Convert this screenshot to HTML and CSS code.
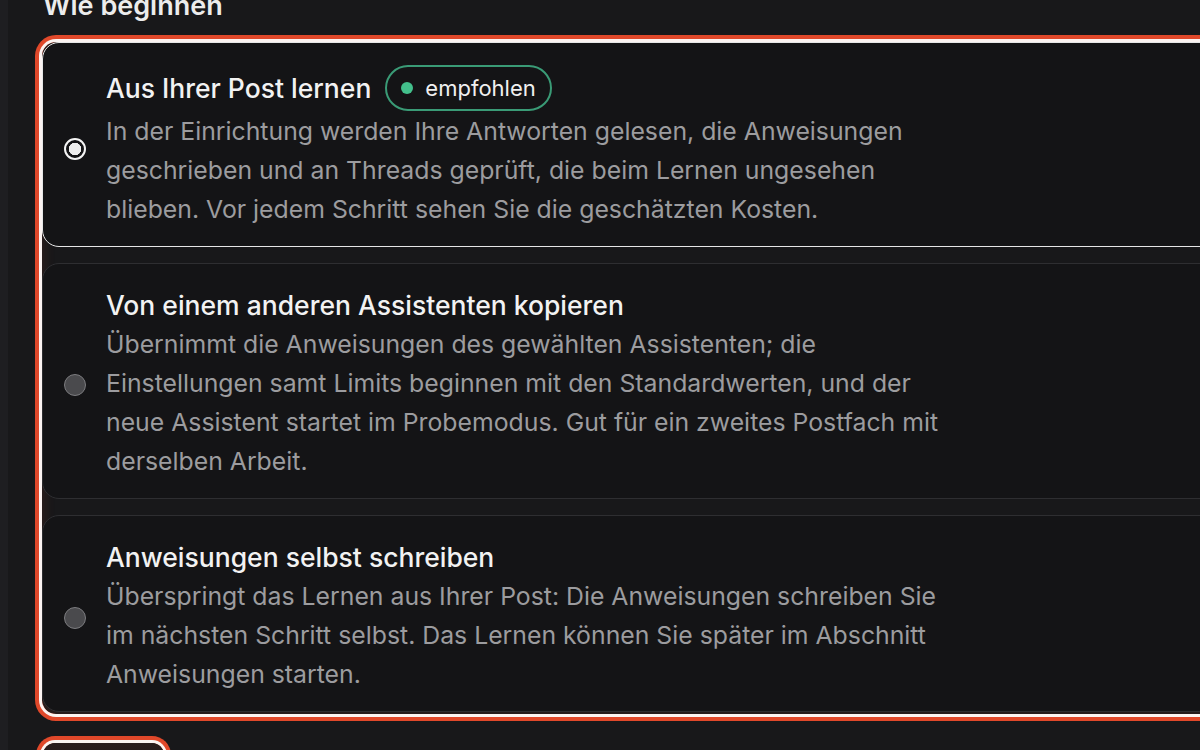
FILE: index.html
```html
<!DOCTYPE html>
<html lang="de">
<head>
    <meta charset="UTF-8">
    <meta name="viewport" content="width=device-width, initial-scale=1.0">
    <title>Neuer Assistent</title>
    <link rel="stylesheet" href="styles.css">
</head>
<body>

    <div class="rail"></div>

    <main class="setup">
        <h2 class="section-title">Wie beginnen</h2>

        <!-- Start options, the group has keyboard focus -->
        <div class="choices" role="radiogroup" aria-label="Wie beginnen">

            <label class="choice selected">
                <span class="radio checked"></span>
                <span class="choice-body">
                    <span class="choice-title">
                        Aus Ihrer Post lernen
                        <span class="badge"><span class="badge-dot"></span>empfohlen</span>
                    </span>
                    <span class="choice-text">In der Einrichtung werden Ihre Antworten gelesen, die Anweisungen geschrieben und an Threads geprüft, die beim Lernen ungesehen blieben. Vor jedem Schritt sehen Sie die geschätzten Kosten.</span>
                </span>
            </label>

            <label class="choice">
                <span class="radio"></span>
                <span class="choice-body">
                    <span class="choice-title">Von einem anderen Assistenten kopieren</span>
                    <span class="choice-text">Übernimmt die Anweisungen des gewählten Assistenten; die Einstellungen samt Limits beginnen mit den Standardwerten, und der neue Assistent startet im Probemodus. Gut für ein zweites Postfach mit derselben Arbeit.</span>
                </span>
            </label>

            <label class="choice">
                <span class="radio"></span>
                <span class="choice-body">
                    <span class="choice-title">Anweisungen selbst schreiben</span>
                    <span class="choice-text">Überspringt das Lernen aus Ihrer Post: Die Anweisungen schreiben Sie im nächsten Schritt selbst. Das Lernen können Sie später im Abschnitt Anweisungen starten.</span>
                </span>
            </label>

        </div>

        <button class="next-btn" type="button">Weiter</button>
    </main>

</body>
</html>
```

FILE: styles.css
```css
body {
    margin: 0;
    display: flex;
    height: 750px;
    overflow: hidden;
    background-color: #18181a;
    font-family: Inter, "Noto Sans", sans-serif;
    color: #f0f0f0;
}
.rail {
    width: 8px;
    flex: none;
    background-color: #1e1e21;
}
.setup {
    padding-left: 34px;
    flex: none;
    width: 1300px;
}
.section-title {
    margin: -9px 0 21px 1px;
    font-size: 27px;
    line-height: 30px;
    font-weight: 600;
    color: #ececec;
}
/* Radio group with focus ring */
.choices {
    display: flex;
    flex-direction: column;
    gap: 16px;
    padding: 0 0 2px;
    border-radius: 14px;
    box-shadow: 0 0 0 3px #fbf3f1, 0 0 0 7px #e0482a, inset 0 0 14px rgba(224, 72, 42, 0.16);
}
.choice {
    display: flex;
    align-items: center;
    gap: 20px;
    padding: 21px 24px 17px 21px;
    border: 1px solid #2e2e31;
    border-radius: 17px;
    background-color: #141416;
    cursor: pointer;
}
.choice.selected {
    border-color: #e6e6e6;
}
.radio {
    flex: none;
    width: 22px;
    height: 22px;
    margin-top: 4px;
    box-sizing: border-box;
    border-radius: 50%;
    border: 1.5px solid #7c7c7f;
    background-color: #4a4a4d;
}
.radio.checked {
    border: 2.5px solid #f4f4f4;
    background: radial-gradient(circle, #efefef 0 6px, #141416 6.5px);
}
.choice-body {
    display: flex;
    flex-direction: column;
}
.choice-title {
    display: flex;
    align-items: center;
    gap: 14px;
    min-height: 40px;
    font-size: 26.5px;
    line-height: 40px;
    font-weight: 500;
    color: #f2f2f2;
}
.choice-text {
    max-width: 855px;
    font-size: 24.8px;
    line-height: 39px;
    color: #9c9c9f;
}
.badge {
    display: inline-flex;
    align-items: center;
    gap: 12px;
    height: 46px;
    margin: 1px 0;
    box-sizing: border-box;
    padding: 0 14px;
    border: 2px solid #3a9b76;
    border-radius: 23px;
    font-size: 22px;
    font-weight: 400;
    color: #f0f0f0;
}
.badge-dot {
    width: 12px;
    height: 12px;
    border-radius: 50%;
    background-color: #43c08c;
}
.next-btn {
    margin: 29px 0 0 1px;
    width: 121px;
    height: 48px;
    border: none;
    border-radius: 12px;
    background: linear-gradient(#2a1c1c, #1d1718);
    color: #f0f0f0;
    font-family: inherit;
    font-size: 20px;
    box-shadow: 0 0 0 3px #fbf3f1, 0 0 0 7px #e0482a;
}
```
